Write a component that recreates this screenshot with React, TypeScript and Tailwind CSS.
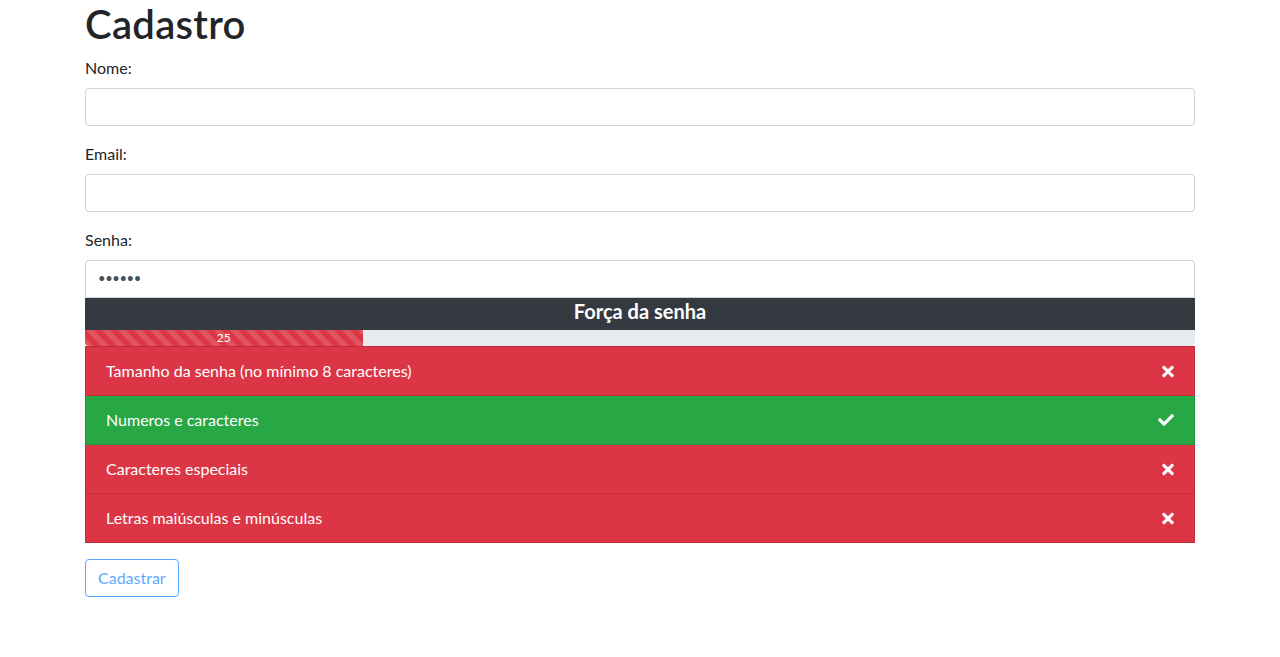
import React from "react";
import { FaTimes, FaCheck } from "react-icons/fa";

const stripes =
  "bg-[linear-gradient(45deg,rgba(255,255,255,.15)_25%,transparent_25%,transparent_50%,rgba(255,255,255,.15)_50%,rgba(255,255,255,.15)_75%,transparent_75%,transparent)] bg-[length:1rem_1rem]";

function Field({ label, value }: { label: string; value?: string }) {
  return (
    <div className="mb-4">
      <label className="block mb-2 leading-6">{label}</label>
      <div className="h-[38px] w-full border border-[#ced4da] rounded bg-white px-3 flex items-center text-[#495057]">
        {value}
      </div>
    </div>
  );
}

const rules = [
  { text: "Tamanho da senha (no mínimo 8 caracteres)", ok: false },
  { text: "Numeros e caracteres", ok: true },
  { text: "Caracteres especiais", ok: false },
  { text: "Letras maiúsculas e minúsculas", ok: false },
];

export default function App() {
  return (
    <div className="min-h-screen bg-white text-[#212529] text-base font-['Lato','Noto_Sans',sans-serif]">
      <div className="mx-auto w-[1140px] px-[15px]">
        <h1 className="text-[40px] leading-[1.2] font-semibold tracking-[0.3px] mb-2">Cadastro</h1>
        <Field label="Nome:" />
        <Field label="Email:" />
        <div>
          <label className="block mb-2 leading-6">Senha:</label>
          <div className="h-[38px] w-full border border-[#ced4da] rounded-t bg-white px-3 flex items-center text-[#495057] text-[13px] tracking-[-0.4px]">
            ••••••
          </div>
        </div>
        <div className="h-8 pb-[7px] bg-[#343a40] text-white font-bold text-xl flex items-center justify-center">
          Força da senha
        </div>
        <div className="h-4 bg-[#e9ecef] rounded-b flex overflow-hidden">
          <div
            className={`w-1/4 h-full bg-[#dc3545] ${stripes} text-white text-xs flex items-center justify-center`}
          >
            25
          </div>
        </div>
        <ul>
          {rules.map((r, i) => (
            <li
              key={i}
              className={`flex items-center justify-between px-5 py-3 leading-6 text-white border border-[rgba(0,0,0,0.125)] ${
                i > 0 ? "border-t-0" : ""
              } ${r.ok ? "bg-[#28a745]" : "bg-[#dc3545]"}`}
            >
              <span>{r.text}</span>
              {r.ok ? (
                <FaCheck className="w-4 h-4" />
              ) : (
                <FaTimes className="w-[12px] h-[17px]" />
              )}
            </li>
          ))}
        </ul>
        <button
          disabled
          className="mt-4 h-[38px] px-3 border border-[#007bff] text-[#007bff] rounded opacity-65 leading-6"
        >
          Cadastrar
        </button>
      </div>
    </div>
  );
}
